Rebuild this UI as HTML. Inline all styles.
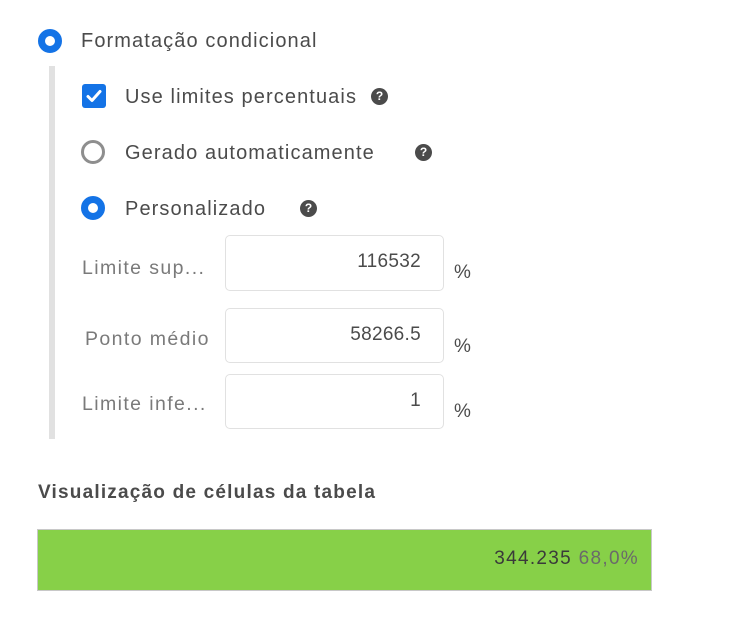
<!DOCTYPE html>
<html><head><meta charset="utf-8"><style>
*{margin:0;padding:0;box-sizing:border-box}
body{width:736px;height:618px;background:#fff;position:relative;overflow:hidden;font-family:"Liberation Sans",sans-serif;color:#4b4b4b}
.a{position:absolute;white-space:nowrap}
.rad{position:absolute;width:24px;height:24px;border-radius:50%;border:7px solid #1473e6;background:#fff}
.radoff{position:absolute;width:24px;height:24px;border-radius:50%;border:3px solid #8e8e8e;background:#fff}
.help{position:absolute;width:17px;height:17px;border-radius:50%;background:#4b4b4b;color:#fff;font-size:12px;font-weight:bold;text-align:center;line-height:17px}
.t{font-size:20px;line-height:24px;letter-spacing:1.1px}
.lbl{font-size:19.5px;color:#7a7a7a;line-height:24px;letter-spacing:1.4px}
.inp{position:absolute;left:225px;width:219px;border:1px solid #e1e1e1;border-radius:5px;font-size:19px;text-align:right;padding-right:22px;color:#4b4b4b;letter-spacing:0.3px}
.pct{font-size:19px;color:#4b4b4b}
</style></head><body>
<div class="rad" style="left:38px;top:29px"></div>
<div class="a t" style="left:81px;top:29px">Formatação condicional</div>
<div class="a" style="left:49px;top:66px;width:6px;height:373px;background:#e1e1e1"></div>

<div class="a" style="left:82px;top:84px;width:24px;height:24px;border-radius:3px;background:#1473e6">
<svg width="24" height="24" viewBox="0 0 24 24"><path d="M6 12.5l4 4 8-9" fill="none" stroke="#fff" stroke-width="3" stroke-linecap="round" stroke-linejoin="round"/></svg></div>
<div class="a t" style="left:125px;top:85px">Use limites percentuais</div>
<div class="help" style="left:371px;top:88px">?</div>

<div class="radoff" style="left:81px;top:140px"></div>
<div class="a t" style="left:125px;top:141px">Gerado automaticamente</div>
<div class="help" style="left:415px;top:144px">?</div>

<div class="rad" style="left:81px;top:196px"></div>
<div class="a t" style="left:125px;top:197px">Personalizado</div>
<div class="help" style="left:300px;top:200px">?</div>

<div class="a lbl" style="left:82px;top:256px">Limite sup...</div>
<div class="inp" style="top:235px;height:56px;line-height:52px">116532</div>
<div class="a pct" style="left:454px;top:262px">%</div>

<div class="a lbl" style="left:85px;top:327px">Ponto médio</div>
<div class="inp" style="top:308px;height:55px;line-height:52px">58266.5</div>
<div class="a pct" style="left:454px;top:336px">%</div>

<div class="a lbl" style="left:82px;top:392px">Limite infe...</div>
<div class="inp" style="top:374px;height:55px;line-height:52px">1</div>
<div class="a pct" style="left:454px;top:401px">%</div>

<div class="a" style="left:38px;top:482px;font-size:19px;font-weight:bold;color:#4b4b4b;letter-spacing:1.2px">Visualização de células da tabela</div>
<div class="a" style="left:37px;top:529px;width:615px;height:62px;background:#87d048;border:1px solid #c8c8c8"></div>
<div class="a" style="left:300px;width:339px;top:548px;text-align:right;font-size:19px;letter-spacing:1.3px"><span style="color:#3a3a3a">344.235</span> <span style="color:#6a6a6a">68,0%</span></div>
</body></html>
